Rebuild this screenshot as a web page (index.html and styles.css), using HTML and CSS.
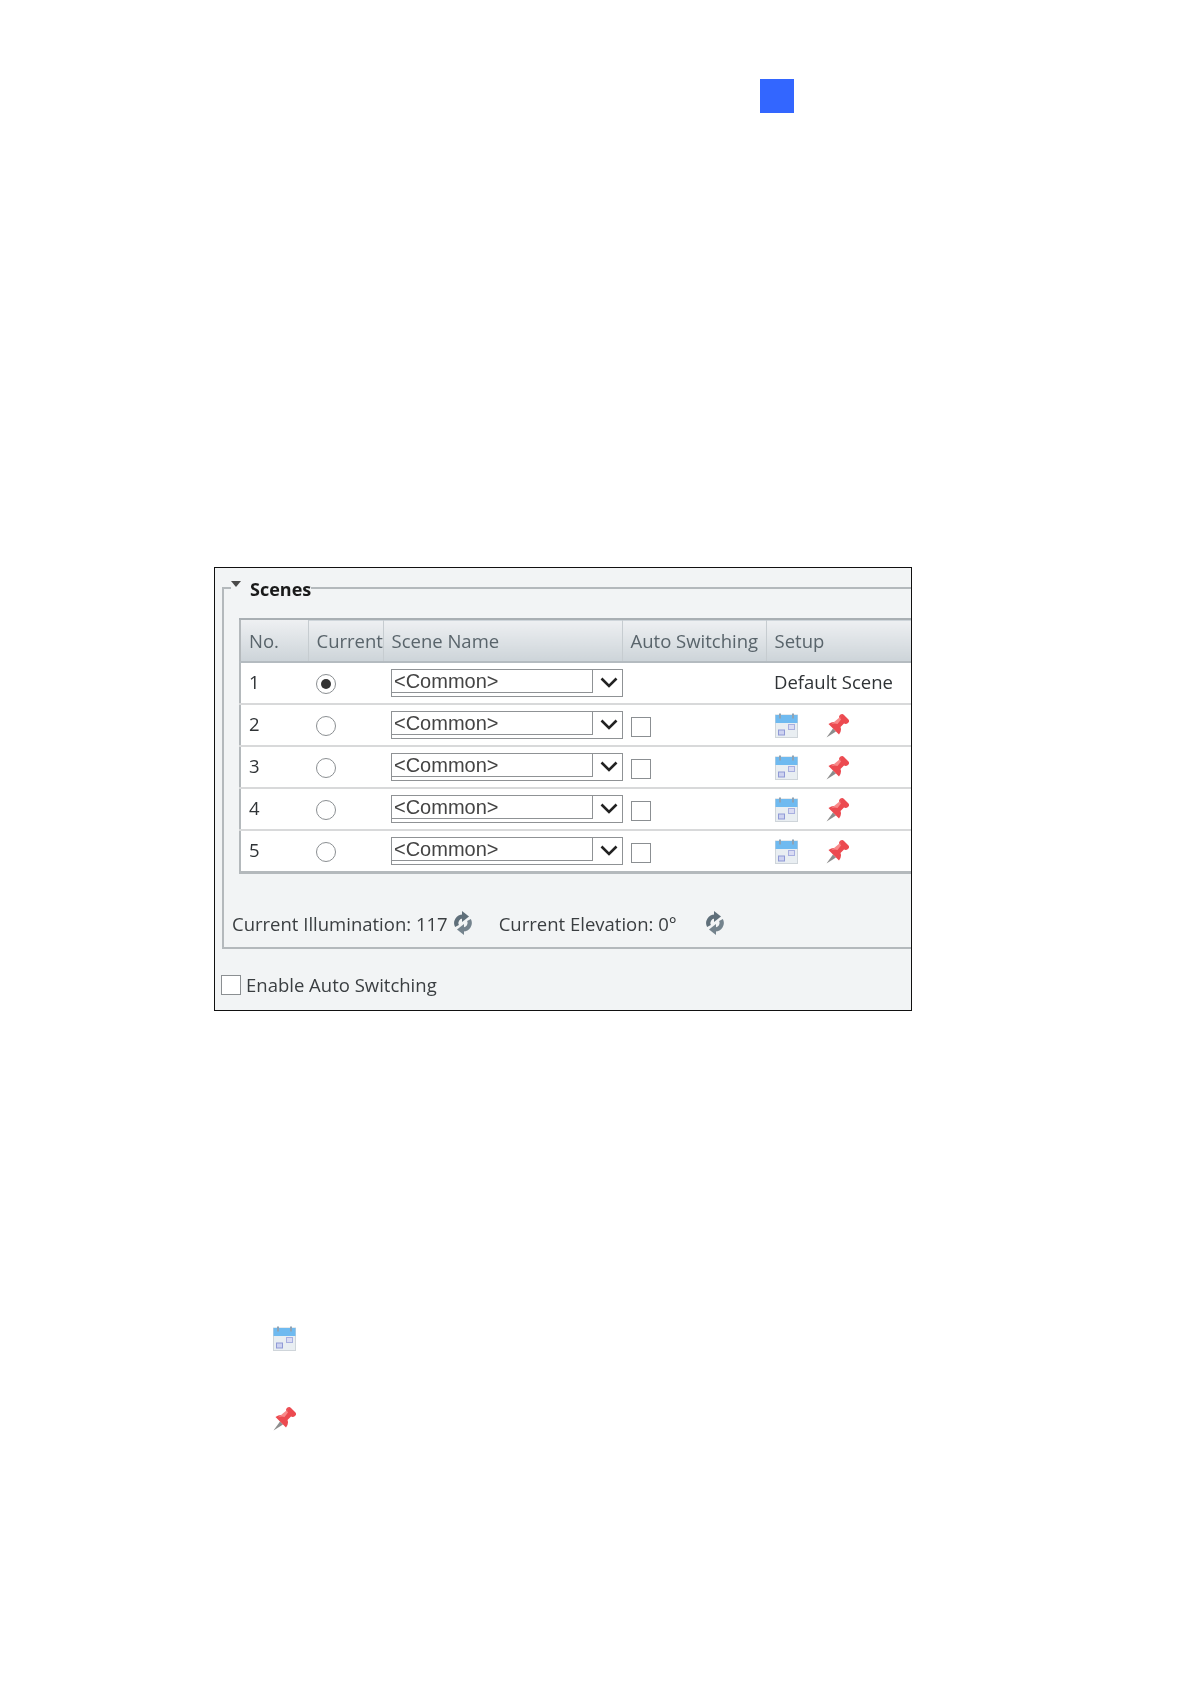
FILE: index.html
```html
<!DOCTYPE html>
<html lang="en">
<head>
<meta charset="utf-8">
<title>Scenes</title>
<link rel="stylesheet" href="styles.css">
</head>
<body>
<svg class="defs" width="0" height="0" aria-hidden="true">
  <defs>
    <symbol id="cal" viewBox="0 0 23 25">
      <rect x="0.5" y="2" width="22" height="22.5" fill="#e9eef2" stroke="#cfd5da"/>
      <rect x="0.5" y="2" width="22" height="8" fill="#6fbaf0"/>
      <rect x="4" y="0.5" width="2" height="5" fill="#8ea3b5"/>
      <rect x="17" y="0.5" width="2" height="5" fill="#8ea3b5"/>
      <rect x="3.5" y="17" width="6" height="5" fill="#cdd2f0" stroke="#8f99d6"/>
      <rect x="13.5" y="11.5" width="6" height="5" fill="#dadcf3" stroke="#a8afe0"/>
    </symbol>
    <symbol id="pin" viewBox="0 0 23 24">
      <path d="M0.500 23.500l6.500-9 3 3z" fill="#8d8d8d"/>
      <path d="M2.500 10q4-3 8-1.500l3-3.500q-1.500-2.500 1-4.500 2-1 3.500.5l4.500 4.500q1.500 2-.5 3.500-2 1.500-4 .5l-3.500 3.500q1.500 4-1.500 7.500z" fill="#ec4a50"/>
      <path d="M5 10.500q3-1.500 6.500-.5l3.500-4.500-1-1.500q.5-2.500 2.500-3z" fill="#f88a8a"/>
    </symbol>
    <symbol id="refresh" viewBox="0 0 22 24">
      <path d="M5 15A6.500 6.500 0 0 1 11 5.500" fill="none" stroke="#5f6f7a" stroke-width="4.200"/>
      <path d="M10 0l7 5.500-7 5.500z" fill="#5f6f7a"/>
      <path d="M17 9A6.500 6.500 0 0 1 11 18.500" fill="none" stroke="#74838d" stroke-width="4.200"/>
      <path d="M12 24l-7-5.500 7-5.500z" fill="#74838d"/>
    </symbol>
    <symbol id="chev" viewBox="0 0 18 11">
      <path d="M1.500 1.500L9 9l7.500-7.500" fill="none" stroke="#222" stroke-width="2.600"/>
    </symbol>
  </defs>
</svg>

<main class="page">
  <div class="square"></div>

  <section class="panel">
    <fieldset class="group">
      <legend class="legend"><span class="tri"></span><span class="legend-text">Scenes</span></legend>
      <table class="scenes">
        <colgroup>
          <col class="c-no"><col class="c-cur"><col class="c-name"><col class="c-auto"><col class="c-setup">
        </colgroup>
        <thead>
          <tr><th>No.</th><th>Current</th><th>Scene Name</th><th>Auto Switching</th><th>Setup</th></tr>
        </thead>
        <tbody>
          <tr>
            <td class="txt">1</td>
            <td><span class="radio on"></span></td>
            <td><div class="select"><div class="select-val">&lt;Common&gt;</div><svg class="chev"><use href="#chev"/></svg></div></td>
            <td></td>
            <td class="txt">Default Scene</td>
          </tr>
          <tr>
            <td class="txt">2</td>
            <td><span class="radio"></span></td>
            <td><div class="select"><div class="select-val">&lt;Common&gt;</div><svg class="chev"><use href="#chev"/></svg></div></td>
            <td><span class="check"></span></td>
            <td><div class="tools"><svg class="ico-cal"><use href="#cal"/></svg><svg class="ico-pin"><use href="#pin"/></svg></div></td>
          </tr>
          <tr>
            <td class="txt">3</td>
            <td><span class="radio"></span></td>
            <td><div class="select"><div class="select-val">&lt;Common&gt;</div><svg class="chev"><use href="#chev"/></svg></div></td>
            <td><span class="check"></span></td>
            <td><div class="tools"><svg class="ico-cal"><use href="#cal"/></svg><svg class="ico-pin"><use href="#pin"/></svg></div></td>
          </tr>
          <tr>
            <td class="txt">4</td>
            <td><span class="radio"></span></td>
            <td><div class="select"><div class="select-val">&lt;Common&gt;</div><svg class="chev"><use href="#chev"/></svg></div></td>
            <td><span class="check"></span></td>
            <td><div class="tools"><svg class="ico-cal"><use href="#cal"/></svg><svg class="ico-pin"><use href="#pin"/></svg></div></td>
          </tr>
          <tr>
            <td class="txt">5</td>
            <td><span class="radio"></span></td>
            <td><div class="select"><div class="select-val">&lt;Common&gt;</div><svg class="chev"><use href="#chev"/></svg></div></td>
            <td><span class="check"></span></td>
            <td><div class="tools"><svg class="ico-cal"><use href="#cal"/></svg><svg class="ico-pin"><use href="#pin"/></svg></div></td>
          </tr>
        </tbody>
      </table>
      <div class="status">
        <span>Current Illumination: 117</span>
        <svg class="ico-refresh"><use href="#refresh"/></svg>
        <span class="elev">Current Elevation: 0°</span>
        <svg class="ico-refresh second"><use href="#refresh"/></svg>
      </div>
    </fieldset>
    <div class="enable"><span class="check big"></span><span>Enable Auto Switching</span></div>
  </section>

  <div class="legend-icons">
    <svg class="ico-cal"><use href="#cal"/></svg>
    <svg class="ico-pin"><use href="#pin"/></svg>
  </div>
</main>
</body>
</html>
```

FILE: styles.css
```css
html, body {
  margin: 0;
  padding: 0;
  background: #ffffff;
}

.defs {
  position: absolute;
}

.page {
  width: 1191px;
  height: 1684px;
  padding-top: 79px;
  box-sizing: border-box;
  font-family: "Open Sans", "Noto Sans", sans-serif;
  font-size: 18.5px;
  color: #2f3336;
}

.square {
  width: 34px;
  height: 34px;
  margin-left: 760px;
  background: #3366ff;
}

.panel {
  width: 698px;
  height: 444px;
  margin: 454px 0 0 214px;
  box-sizing: border-box;
  border: 1px solid #111;
  background: #f2f4f5;
  padding: 8px 0 0 7px;
  overflow: hidden;
}

.group {
  margin: 0;
  padding: 18px 0 0 15px;
  height: 373px;
  box-sizing: border-box;
  border: 2px solid #b4b9bc;
  border-right: 0;
  min-width: 0;
  filter: blur(0.4px);
}

.legend {
  display: flex;
  align-items: flex-start;
  gap: 9px;
  height: 24px;
  margin-left: -8px;
  padding: 0;
  font-size: 18px;
  font-weight: 700;
  line-height: 24px;
  color: #1a1a1a;
  background: #f2f4f5;
}

.legend-text {
  margin-top: 1px;
}

.tri {
  width: 0;
  height: 0;
  margin-top: 5px;
  border-left: 5px solid transparent;
  border-right: 5px solid transparent;
  border-top: 6px solid #4a4a4a;
}

.scenes {
  width: 673px;
  table-layout: fixed;
  border-collapse: collapse;
  background: #fff;
  border-left: 2px solid #b4b9bc;
  border-bottom: 3px solid #b4b9bc;
  border-top: 2px solid #a9afb3;
}

.c-no { width: 68px; }
.c-cur { width: 75px; }
.c-name { width: 239px; }
.c-auto { width: 144px; }
.c-setup { width: 147px; }

.scenes th {
  height: 41px;
  padding: 0 0 0 8px;
  text-align: left;
  font-weight: 400;
  color: #59646b;
  white-space: nowrap;
  background: linear-gradient(#eef0f2, #cdd4d9);
  border-left: 1px solid #c6ccd0;
  border-bottom: 2px solid #b4bbc0;
}

.scenes th:first-child {
  border-left: 0;
}

.scenes td {
  height: 40px;
  padding: 0 0 0 8px;
  border-bottom: 2px solid #d8d9da;
  white-space: nowrap;
}

.scenes td.txt {
  padding-bottom: 3px;
  box-sizing: border-box;
}

.scenes tbody tr:last-child td {
  border-bottom: 0;
}

.radio {
  display: block;
  width: 20px;
  height: 20px;
  margin: 2px 0 0 0;
  box-sizing: border-box;
  border: 1.5px solid #8b8f92;
  border-radius: 50%;
  background: #fff;
}

.radio.on {
  position: relative;
}

.radio.on::after {
  content: "";
  position: absolute;
  left: 3.500px;
  top: 3.500px;
  width: 10px;
  height: 10px;
  border-radius: 50%;
  background: #333;
}

.select {
  display: flex;
  align-items: flex-start;
  width: 232px;
  height: 28px;
  box-sizing: border-box;
  border: 1.500px solid #8f9295;
  background: #fff;
}

.select-val {
  width: 201px;
  height: 23px;
  padding: 1px 0 0 2px;
  box-sizing: border-box;
  border-right: 1.500px solid #8f9295;
  border-bottom: 1.500px solid #8f9295;
  font-family: "Liberation Sans", Arial, sans-serif;
  font-size: 20px;
  line-height: 20px;
  color: #444;
}

.chev {
  width: 18px;
  height: 11px;
  margin: 7px 0 0 7px;
}

.check {
  display: block;
  width: 20px;
  height: 20px;
  margin: 3px 0 0 1px;
  box-sizing: border-box;
  border: 1.500px solid #8b8f92;
  background: #fff;
}

.tools {
  display: flex;
  align-items: center;
  gap: 28px;
  margin: 1px 0 0 1px;
}

.ico-cal {
  display: block;
  width: 23px;
  height: 25px;
}

.ico-pin {
  display: block;
  width: 23px;
  height: 24px;
}

.status {
  display: flex;
  align-items: center;
  height: 30px;
  margin: 34px 0 0 -7px;
  color: #3a3e41;
}

.ico-refresh {
  width: 22px;
  height: 24px;
  margin-left: 4px;
}

.elev {
  margin-left: 25px;
}

.ico-refresh.second {
  margin-left: 27px;
}

.enable {
  display: flex;
  align-items: center;
  gap: 5px;
  margin: 23px 0 0 -1px;
  color: #3a3e41;
  filter: blur(0.4px);
}

.enable .check {
  margin: 1px 0 0 0;
}

.legend-icons {
  display: flex;
  flex-direction: column;
  gap: 56px;
  margin: 315px 0 0 273px;
  filter: blur(0.4px);
}
```
